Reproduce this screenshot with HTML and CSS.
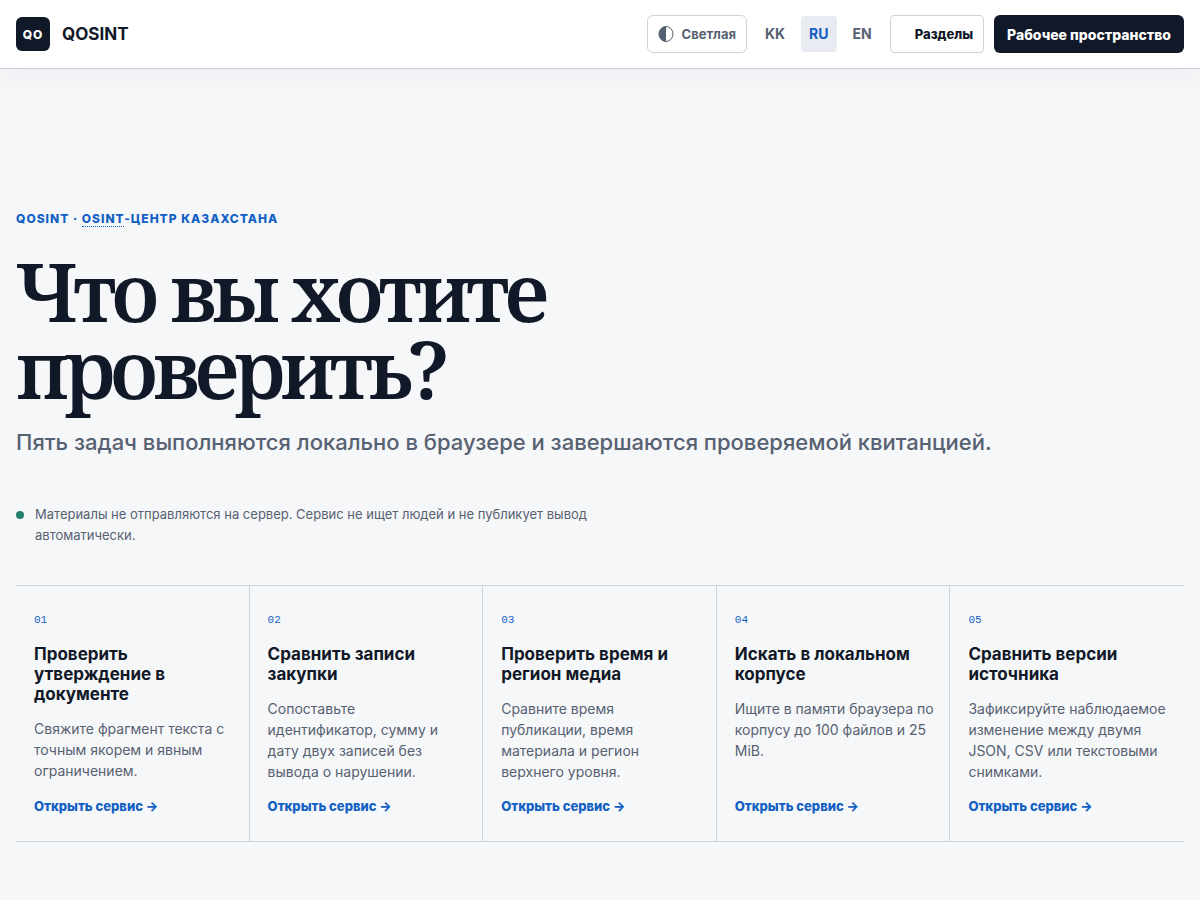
FILE: index.html
```html
<!DOCTYPE html>
<html lang="ru">
<head>
  <meta charset="UTF-8">
  <meta name="viewport" content="width=device-width, initial-scale=1.0">
  <title>QOSINT</title>
  <link rel="stylesheet" href="styles.css">
</head>
<body>

  <header class="site-header">
    <a class="brand" href="#">
      <span class="brand-mark">QO</span>
      <span class="brand-name">QOSINT</span>
    </a>
    <div class="header-actions">
      <button type="button" class="theme-toggle">
        <svg width="16" height="16" viewBox="0 0 16 16" aria-hidden="true">
          <ellipse cx="8" cy="8" rx="7" ry="7.5" fill="none" stroke="currentColor" stroke-width="1"/>
          <path d="M8 .5C4 .5 1 3.800 1 8s3 7.500 7 7.500z" fill="currentColor"/>
        </svg>
        Светлая
      </button>
      <nav class="lang-switch" aria-label="Язык">
        <a href="#kk">KK</a>
        <a href="#ru" class="active">RU</a>
        <a href="#en">EN</a>
      </nav>
      <button type="button" class="menu-button">Разделы</button>
      <a class="workspace-link" href="#workspace">Рабочее пространство</a>
    </div>
  </header>

  <main class="page">
    <section class="hero">
      <p class="eyebrow">QOSINT · <abbr>OSINT</abbr>-ЦЕНТР КАЗАХСТАНА</p>
      <h1>Что вы хотите проверить?</h1>
      <p class="lead">Пять задач выполняются локально в браузере и завершаются проверяемой квитанцией.</p>
      <p class="notice">Материалы не отправляются на сервер. Сервис не ищет людей и не публикует вывод автоматически.</p>
    </section>

    <section class="tasks">
      <article class="task">
        <span class="task-number">01</span>
        <h2>Проверить утверждение в документе</h2>
        <p>Свяжите фрагмент текста с точным якорем и явным ограничением.</p>
        <a href="#claim">Открыть сервис →</a>
      </article>
      <article class="task">
        <span class="task-number">02</span>
        <h2>Сравнить записи закупки</h2>
        <p>Сопоставьте идентификатор, сумму и дату двух записей без вывода о нарушении.</p>
        <a href="#procurement">Открыть сервис →</a>
      </article>
      <article class="task">
        <span class="task-number">03</span>
        <h2>Проверить время и регион медиа</h2>
        <p>Сравните время публикации, время материала и регион верхнего уровня.</p>
        <a href="#media">Открыть сервис →</a>
      </article>
      <article class="task">
        <span class="task-number">04</span>
        <h2>Искать в локальном корпусе</h2>
        <p>Ищите в памяти браузера по корпусу до 100 файлов и 25 MiB.</p>
        <a href="#corpus">Открыть сервис →</a>
      </article>
      <article class="task">
        <span class="task-number">05</span>
        <h2>Сравнить версии источника</h2>
        <p>Зафиксируйте наблюдаемое изменение между двумя JSON, CSV или текстовыми снимками.</p>
        <a href="#versions">Открыть сервис →</a>
      </article>
    </section>
  </main>

</body>
</html>
```
FILE: styles.css
```css
:root {
  --ink: #111827;
  --muted: #566171;
  --line: #cdd3dc;
  --accent: #1260c4;
}

* {
  box-sizing: border-box;
}

body {
  margin: 0;
  background: #f6f7f9;
  color: var(--ink);
  font-family: Inter, "Liberation Sans", sans-serif;
  font-size: 16px;
  font-optical-sizing: none;
}

h1, h2, p {
  margin: 0;
}

a {
  color: inherit;
  text-decoration: none;
}

button {
  font: inherit;
  cursor: pointer;
}

.site-header {
  display: flex;
  align-items: center;
  justify-content: space-between;
  padding: 15px 16px;
  background: #fff;
  border-bottom: 1px solid var(--line);
  box-shadow: 0 8px 24px rgba(17, 24, 39, 0.04);
}

.brand {
  display: flex;
  align-items: center;
  gap: 12px;
  font-size: 17px;
  font-weight: 700;
}

.brand-mark {
  display: grid;
  place-items: center;
  width: 34px;
  height: 34px;
  border-radius: 6px;
  background: var(--ink);
  color: #fff;
  font-size: 12px;
  font-weight: 800;
  letter-spacing: 1px;
}

.header-actions {
  display: flex;
  align-items: center;
  gap: 10px;
}

.theme-toggle,
.menu-button,
.workspace-link {
  display: flex;
  align-items: center;
  height: 38px;
  border-radius: 6px;
  font-size: 13px;
  font-weight: 800;
}

.theme-toggle {
  gap: 8px;
  padding: 0 10px;
  border: 1px solid var(--line);
  background: #fff;
  color: var(--muted);
  font-weight: 700;
}

.lang-switch {
  display: flex;
  gap: 8px;
}

.lang-switch a {
  padding: 0 8px;
  border-radius: 4px;
  color: var(--muted);
  font-size: 14px;
  font-weight: 700;
  line-height: 36px;
}

.lang-switch .active {
  background: #e8ecf2;
  color: var(--accent);
}

.menu-button {
  padding: 0 10px 0 24px;
  border: 1px solid var(--line);
  border-radius: 4px;
  background: #fff;
  color: var(--ink);
}

.workspace-link {
  padding: 0 13px;
  background: var(--ink);
  color: #fff;
  font-size: 14px;
}

.page {
  padding: 140px 16px 56px;
}

.eyebrow {
  color: var(--accent);
  font-size: 12px;
  font-weight: 800;
  line-height: 20px;
  letter-spacing: 1px;
}

.eyebrow abbr {
  border-bottom: 1px dotted var(--accent);
}

h1 {
  max-width: 800px;
  margin-top: 23px;
  font-family: "Noto Serif", "DejaVu Serif", serif;
  font-size: 80px;
  font-weight: 600;
  line-height: 77px;
  letter-spacing: -5px;
}

.lead {
  margin-top: 19px;
  color: var(--muted);
  font-size: 22px;
  font-weight: 500;
  line-height: 34px;
}

.notice {
  position: relative;
  max-width: 640px;
  margin-top: 45px;
  padding-left: 19px;
  color: var(--muted);
  font-size: 13px;
  line-height: 21px;
}

.notice::before {
  content: "";
  position: absolute;
  top: 7px;
  left: 0;
  width: 8px;
  height: 8px;
  border-radius: 50%;
  background: #26806b;
}

.tasks {
  display: grid;
  grid-template-columns: repeat(5, 1fr);
  margin-top: 39px;
  border-top: 1px solid var(--line);
  border-bottom: 1px solid var(--line);
}

.task {
  display: flex;
  flex-direction: column;
  padding: 24px 15px 25px 18px;
  border-right: 1px solid var(--line);
}

.task:last-child {
  border-right: 0;
}

.task-number {
  color: var(--accent);
  font-family: "Liberation Mono", monospace;
  font-size: 11px;
  line-height: 20px;
}

.task h2 {
  margin-top: 14px;
  font-size: 17px;
  font-weight: 700;
  line-height: 20px;
}

.task p {
  margin: 14px 0;
  color: var(--muted);
  font-size: 14px;
  line-height: 21px;
}

.task a {
  margin-top: auto;
  color: var(--accent);
  font-size: 13px;
  font-weight: 800;
  line-height: 20px;
}
```
